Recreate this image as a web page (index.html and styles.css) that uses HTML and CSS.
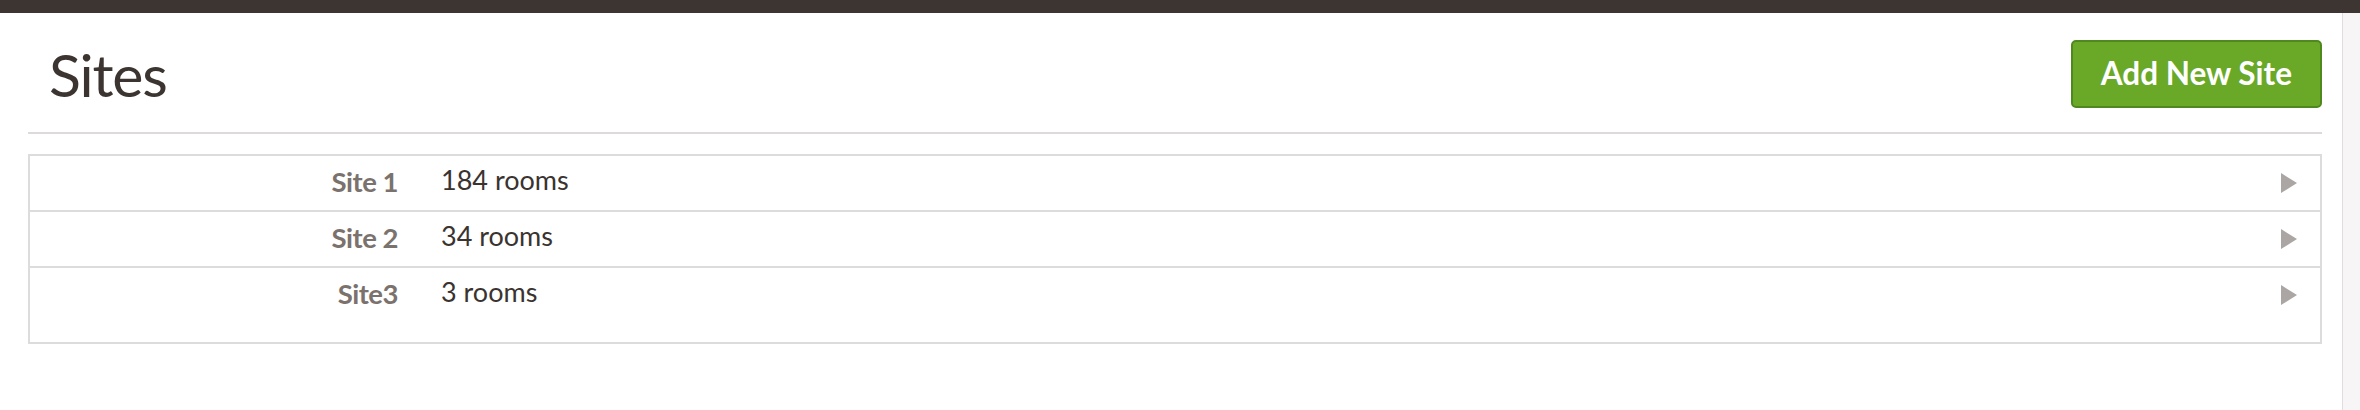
FILE: index.html
```html
<!DOCTYPE html>
<html lang="en">
<head>
<meta charset="utf-8">
<title>Sites</title>
<link rel="stylesheet" href="styles.css">
</head>
<body>
<div class="topbar"></div>
<div class="shell">
  <main class="main">
    <header class="page-header">
      <h1 class="page-title">Sites</h1>
      <button class="btn-add" type="button">Add New Site</button>
    </header>
    <div class="site-table">
      <div class="site-row">
        <span class="site-name">Site 1</span>
        <span class="site-rooms">184 rooms</span>
        <svg class="site-arrow" width="16" height="20" viewBox="0 0 16 20"><polygon points="0,0 16,10 0,20"/></svg>
      </div>
      <div class="site-row">
        <span class="site-name">Site 2</span>
        <span class="site-rooms">34 rooms</span>
        <svg class="site-arrow" width="16" height="20" viewBox="0 0 16 20"><polygon points="0,0 16,10 0,20"/></svg>
      </div>
      <div class="site-row">
        <span class="site-name">Site3</span>
        <span class="site-rooms">3 rooms</span>
        <svg class="site-arrow" width="16" height="20" viewBox="0 0 16 20"><polygon points="0,0 16,10 0,20"/></svg>
      </div>
    </div>
  </main>
  <aside class="side-strip"></aside>
</div>
</body>
</html>
```

FILE: styles.css
```css
* { box-sizing: border-box; }

html, body {
  margin: 0;
  padding: 0;
  background: #ffffff;
  height: 410px;
  overflow: hidden;
  font-family: "Lato", "Open Sans", sans-serif;
}

.topbar {
  height: 13px;
  background: #3d3532;
}

.shell {
  display: flex;
  height: 397px;
}

.main {
  flex: 1;
  padding: 0 20px 0 28px;
}

.side-strip {
  width: 18px;
  border-left: 1px solid #e2dddd;
  background: #f7f5f5;
}

.page-header {
  display: flex;
  justify-content: space-between;
  align-items: center;
  padding: 27px 0 24px;
  border-bottom: 2px solid #dedada;
}

.page-title {
  margin: 0 0 0 21px;
  font-size: 59px;
  line-height: 1;
  font-weight: 400;
  letter-spacing: -1.2px;
  color: #3b3431;
}

.btn-add {
  height: 68px;
  padding: 0 28px;
  border: 2px solid #4e881f;
  border-radius: 5px;
  background: #6aa928;
  color: #ffffff;
  font-family: "Lato", "Open Sans", sans-serif;
  font-size: 31.5px;
  font-weight: 700;
  line-height: 1;
}

.site-table {
  margin-top: 20px;
  border: 2px solid #dcdcdc;
  padding-bottom: 20px;
}

.site-row {
  display: flex;
  align-items: center;
  height: 56px;
  padding-bottom: 3px;
  border-bottom: 2px solid #dcdcdc;
}

.site-row:last-child {
  height: 54px;
  border-bottom: none;
}

.site-name {
  width: 368px;
  text-align: right;
  font-size: 27.5px;
  line-height: 1;
  font-weight: 700;
  letter-spacing: -0.5px;
  color: #7b726e;
}

.site-rooms {
  margin-left: 43px;
  margin-bottom: 5px;
  font-size: 27px;
  line-height: 1;
  color: #3a3330;
}

.site-arrow {
  margin-left: auto;
  margin-right: 23px;
  margin-top: 2px;
  fill: #aba6a3;
}
```
